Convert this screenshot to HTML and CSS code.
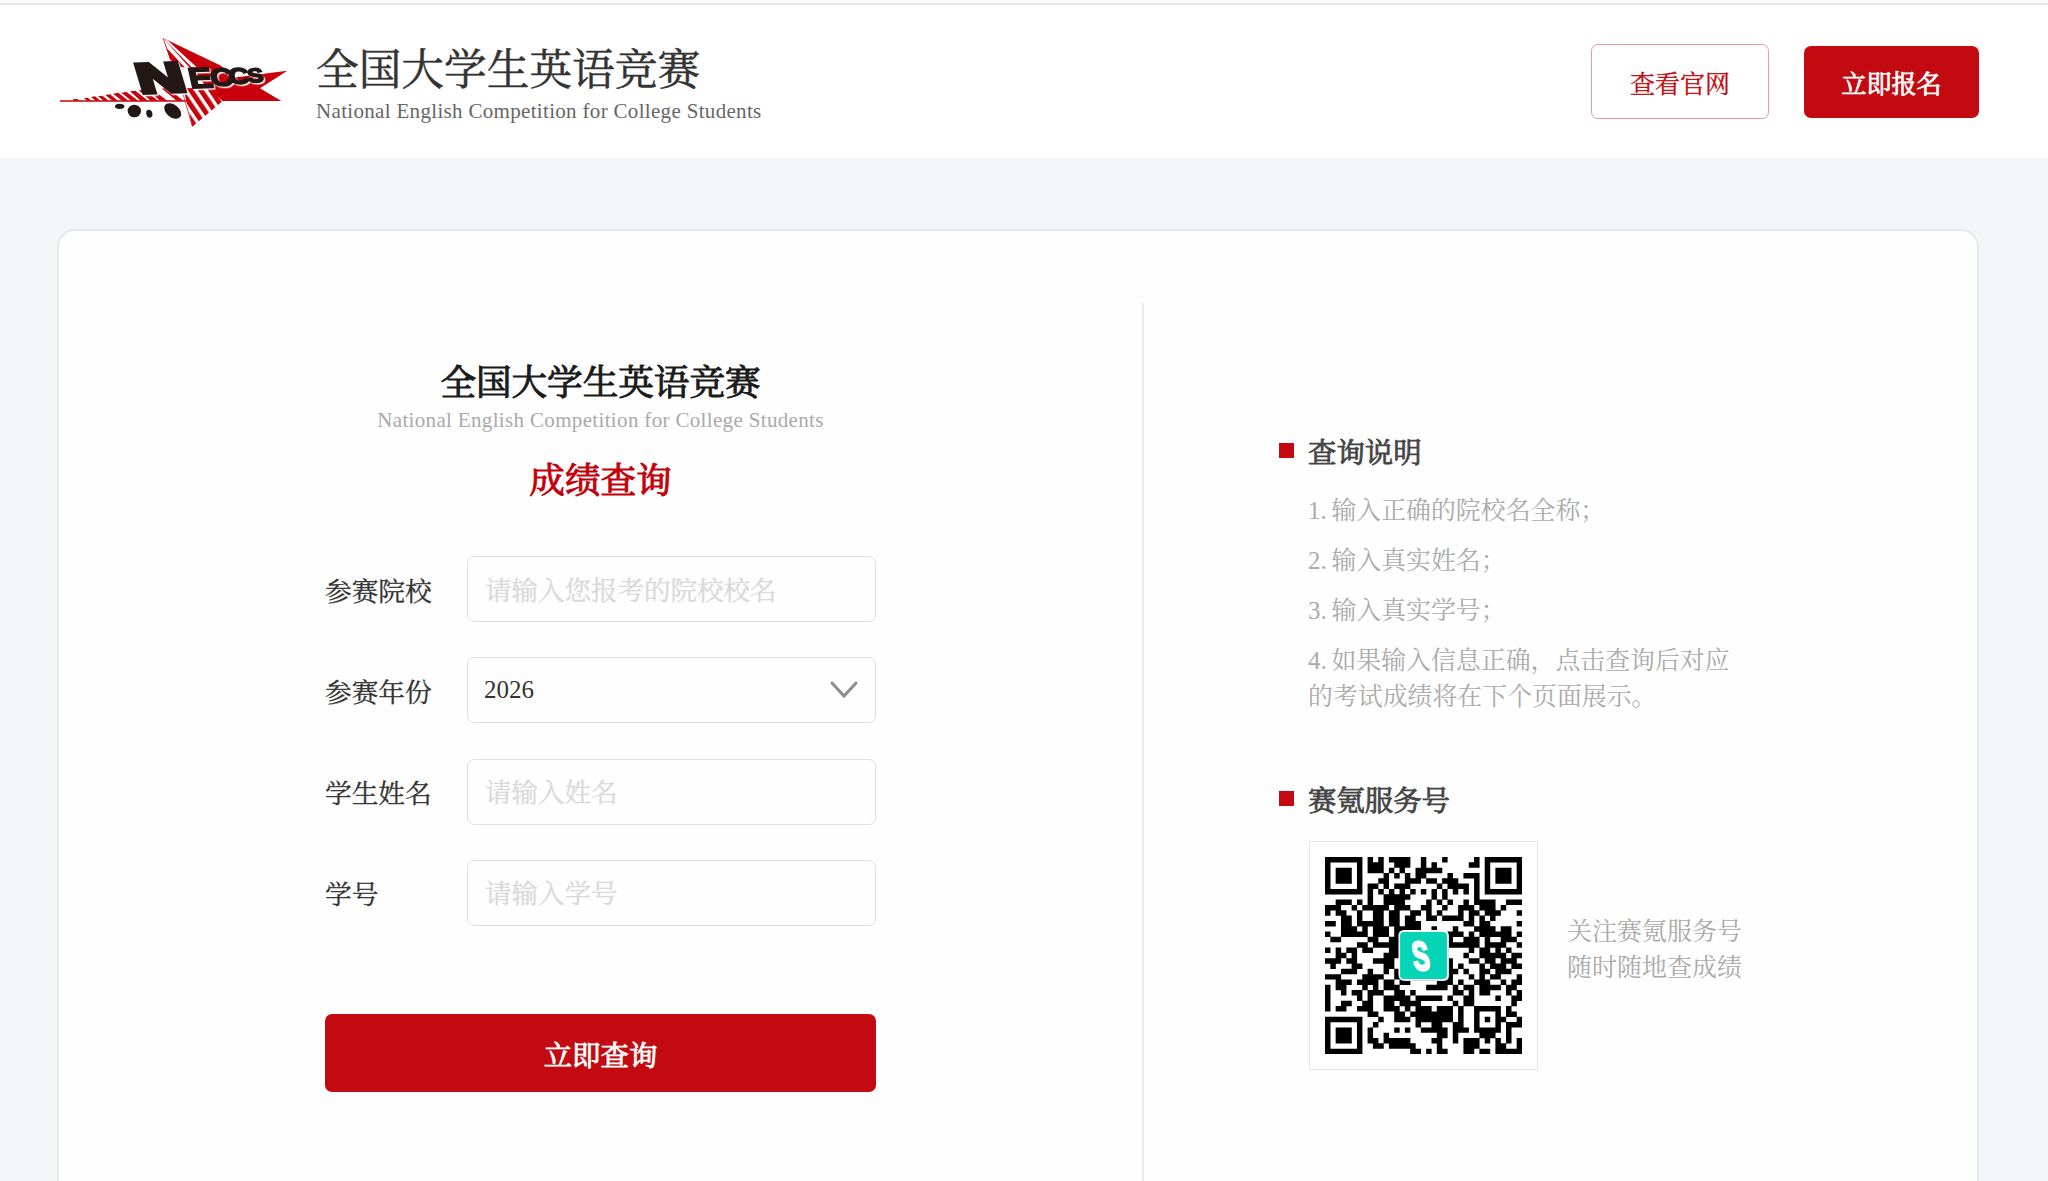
FILE: index.html
```html
<!DOCTYPE html>
<html lang="zh-CN">
<head>
<meta charset="utf-8">
<title>全国大学生英语竞赛 - 成绩查询</title>
<link rel="stylesheet" href="styles.css">
</head>
<body>
<header class="header">
  <svg class="logo" viewBox="54 0 756 360" role="img" aria-label="NECCS">
    <defs>
      <pattern id="hatch" width="25" height="25" patternUnits="userSpaceOnUse" patternTransform="rotate(-34)">
        <rect width="15" height="25" fill="#c8000b"/>
      </pattern>
    </defs>
    <g fill="#c8000b">
      <path d="M60 241 H440 V245 H60 Z"/>
      <path d="M98 237l14 0 8 5-16 0zM132 234l11-1 12 9-14 0zM153 231l12-2 16 13-14 0zM174 229l13-2 19 15-15 0zM196 225l14-2 24 19-17 0zM219 221l16-3 30 24-19 0zM244 218l16-2 34 26-20 0zM270 214l16-2 38 30-22 0zM296 211l16-2 42 33-22 0zM340 224l18 0 24 18-22 0zM366 206l14-4 50 40-20 0z"/>
    </g>
    <path d="M369 54 L540 136 L590 172 L742 152 L660 205 L724 243 L548 243 L500 200 Z" fill="#c8000b"/>
    <path d="M369 54 L384 62 L470 142 L455 142 Z" fill="#fff"/>
    <path d="M369 54 L382 86 L440 142 L424 142 L390 118 Z" fill="#c8000b"/>
    <path d="M376 66 L446 142 L434 142 L380 84 Z" fill="#fff"/>
    <path d="M430 205 L515 203 L548 243 L457 320 Z" fill="url(#hatch)"/>
    <path d="M430 225 L457 320" fill="none" stroke="#c8000b" stroke-width="2"/>
    <path d="M369 54 L396 130" fill="none" stroke="#c8000b" stroke-width="2"/>
    <g class="logo-letters">
      <text class="logo-n" transform="matrix(1.58 -.06 .3 1 303 219)" font-size="124">N</text>
      <text transform="matrix(1.24 -.04 .22 1 452 205)" font-size="86">E</text>
      <text transform="matrix(1.26 -.06 .18 1 516 199)" font-size="74">C</text>
      <text transform="matrix(1.26 -.06 .18 1 570 193)" font-size="67">C</text>
      <text transform="matrix(1.2 -.08 .18 1 626 188)" font-size="59">S</text>
    </g>
    <g fill="#231815">
      <ellipse cx="239" cy="259" rx="14" ry="8"/>
      <ellipse cx="283" cy="273" rx="20" ry="19"/>
      <ellipse cx="328" cy="281" rx="9" ry="12" transform="rotate(-15 328 281)"/>
      <ellipse cx="398" cy="273" rx="29" ry="19" transform="rotate(38 398 273)"/>
    </g>
  </svg>
  <div class="brand">
    <div class="brand-name">全国大学生英语竞赛</div>
    <div class="brand-sub">National English Competition for College Students</div>
  </div>
  <nav class="actions">
    <a class="btn btn-outline">查看官网</a>
    <a class="btn btn-solid">立即报名</a>
  </nav>
</header>
<main class="card">
  <section class="query">
    <div class="query-inner">
      <h1 class="title">全国大学生英语竞赛</h1>
      <p class="subtitle">National English Competition for College Students</p>
      <h2 class="title title-red">成绩查询</h2>
      <form class="form">
        <div class="field"><span class="label">参赛院校</span><div class="control placeholder">请输入您报考的院校校名</div></div>
        <div class="field"><span class="label">参赛年份</span><div class="control select"><span>2026</span><svg class="chevron" viewBox="0 0 28 18"><path d="M2 2 L14 15 L26 2" fill="none" stroke="#8c8c8c" stroke-width="3" stroke-linecap="round"/></svg></div></div>
        <div class="field"><span class="label">学生姓名</span><div class="control placeholder">请输入姓名</div></div>
        <div class="field"><span class="label">学号</span><div class="control placeholder">请输入学号</div></div>
        <div class="submit">立即查询</div>
      </form>
    </div>
  </section>
  <aside class="info">
    <h3 class="info-title"><span>查询说明</span></h3>
    <div class="notes">
      <p>1. 输入正确的院校名全称；</p>
      <p>2. 输入真实姓名；</p>
      <p>3. 输入真实学号；</p>
      <p>4. 如果输入信息正确，点击查询后对应<br>的考试成绩将在下个页面展示。</p>
    </div>
    <h3 class="info-title"><span>赛氪服务号</span></h3>
    <div class="service">
      <div class="qr-frame">
        <svg class="qr" viewBox="0 0 37 37">
          <path id="qr-modules" fill="#000"/>
          <rect x="13.9" y="13.8" width="9.4" height="9.5" rx="1" fill="#ddd"/>
          <rect x="13.8" y="13.7" width="9.3" height="9.4" rx="1" fill="#fff"/>
          <rect x="14.1" y="14.1" width="8.8" height="8.8" rx=".7" fill="#06d4b6"/>
          <text class="qr-mark" transform="matrix(.62 0 .16 1 16.8 21.2)" font-size="7.6">S</text>
        </svg>
      </div>
      <p class="service-text">关注赛氪服务号<br>随时随地查成绩</p>
    </div>
  </aside>
</main>
<script src="qr.js"></script>
</body>
</html>
```
FILE: styles.css
```css
* { box-sizing: border-box; }
body {
  margin: 0;
  height: 1181px;
  overflow: hidden;
  background: #f4f5f7;
  color: #333;
  font-family: "Liberation Serif", "Noto Serif CJK SC", "Noto Sans CJK SC", serif;
}
h1, h2, h3, p { margin: 0; font-weight: 400; }

.header {
  height: 158px;
  padding: 12px 69px 0 58px;
  display: flex;
  align-items: flex-start;
  background: linear-gradient(#fbfbfb 3px, #e4e4e4 3px, #e4e4e4 5px, #fff 5px);
}
.logo { width: 252px; height: 120px; margin-top: 8px; flex: none; }
.logo-letters {
  font-family: "Liberation Sans", sans-serif;
  font-weight: 700;
  fill: #231815;
  stroke: #231815;
  stroke-width: 5px;
  filter: drop-shadow(4px 4px 0 #fff);
}
.logo-n { stroke-width: 12px; }
.brand { margin-left: 6px; padding-top: 34px; }
.brand-name { font-size: 42.7px; line-height: 50px; white-space: nowrap; -webkit-text-stroke: .5px; }
.brand-sub { margin-top: 2px; font-size: 21px; line-height: 26px; letter-spacing: .32px; color: #666; white-space: nowrap; }
.actions { margin-left: auto; padding-top: 32px; display: flex; align-items: center; gap: 35px; }
.btn { display: flex; align-items: center; justify-content: center; border-radius: 7px; font-size: 25px; }
.btn-outline { width: 178px; height: 75px; border: 1.5px solid #e99ba0; color: #c20a10; -webkit-text-stroke: .3px; }
.btn-solid { width: 175px; height: 72px; background: #c20a10; color: #fff; -webkit-text-stroke: .8px; }

.card {
  margin: 71px 69px 0 57px;
  height: 1000px;
  display: flex;
  background: #fefefe;
  border: 2px solid #e6e9ed;
  border-radius: 18px;
  padding-top: 72px;
}
.query { width: 1085px; padding-left: 266px; border-right: 2px solid #e8eaec; }
.query-inner { width: 551px; padding-top: 58px; }
.title { font-size: 35.6px; line-height: 44px; text-align: center; color: #1a1a1a; -webkit-text-stroke: 1px; }
.subtitle { font-size: 21px; line-height: 26px; margin-top: 2px; letter-spacing: .34px; text-align: center; color: #aaa; white-space: nowrap; }
.title-red { margin-top: 26px; color: #c4000a; }
.form { display: flex; flex-direction: column; gap: 35.3px; margin-top: 53px; }
.field { display: flex; align-items: center; }
.label { width: 142px; font-size: 26.7px; -webkit-text-stroke: .3px; }
.control {
  width: 409px;
  height: 66px;
  padding: 0 17px 2px 17px;
  display: flex;
  align-items: center;
  border: 1.5px solid #e0e0e0;
  border-radius: 7px;
  font-size: 26.5px;
}
.placeholder { color: #d9d9d9; -webkit-text-stroke: .3px; }
.select { justify-content: space-between; padding: 0 17px 0 16px; font-size: 25px; }
.chevron { width: 28px; height: 18px; }
.submit {
  height: 78px;
  margin-top: 53px;
  display: flex;
  align-items: center;
  justify-content: center;
  border-radius: 7px;
  background: #c20a10;
  color: #fff;
  font-size: 28.4px;
  -webkit-text-stroke: .9px;
}

.info { padding: 131px 0 0 135px; }
.info-title { display: flex; align-items: center; gap: 14px; height: 36px; font-size: 28.4px; line-height: 36px; color: #444; -webkit-text-stroke: .8px; }
.info-title::before { content: ""; width: 15px; height: 15px; margin-bottom: 3px; background: #c20a10; }
.info-title span { padding-top: 4px; }
.notes { margin: 23px 0 67px 29px; display: flex; flex-direction: column; gap: 14px; font-size: 24.9px; line-height: 36px; color: #aaa; }
.notes p { white-space: nowrap; word-spacing: -1.5px; }
.service { display: flex; align-items: center; margin: 23px 0 0 30px; }
.qr-frame { width: 229px; height: 229px; padding: 15px; border: 1.5px solid #e6e6e6; background: #fff; }
.qr { display: block; width: 197px; height: 197px; }
.qr-mark { font-family: "Liberation Sans", sans-serif; font-weight: 700; fill: #fff; stroke: #fff; stroke-width: .45px; }
.service-text { margin: -11px 0 0 29px; font-size: 25px; line-height: 36px; color: #aaa; }
```
FILE: qr.js
```js
// 37 x 37 module matrix; each string is one row, spaces are separators only.
const rows = [
  "11111110 10101111 00100010 00001011 11111",
  "10000010 11100111 00101000 00011010 00001",
  "10111010 11101010 01111100 00000010 11101",
  "10111010 00010101 01100001 00111010 11101",
  "10111010 00110001 11011011 10001010 11101",
  "10000010 11010111 00000101 11101010 00001",
  "11111110 10101010 10101010 10101011 11111",
  "00000000 10011111 00001010 00001000 00000",
  "00111010 10011110 00010101 00101111 00111",
  "11100101 11110111 00110010 01110111 01000",
  "10110010 01101100 11010100 01011011 10001",
  "00011010 01101101 10011011 11010101 00000",
  "11011011 11101101 11000000 00110110 00001",
  "00011101 01110111 11001000 10001111 01100",
  "10011111 01110100 00000001 11010111 11101",
  "01100000 11001100 00000001 00111010 01110",
  "00000011 01111100 00000001 11111011 11001",
  "10101101 10001100 00000000 00010110 10100",
  "00110100 00011100 00000000 00100111 11011",
  "11101100 01111000 00000001 00011011 01110",
  "01000110 00011000 00000001 01000101 11011",
  "00011100 10010100 00000001 10100110 11100",
  "11100001 11100100 00000001 00010101 10001",
  "00111011 11011011 00000111 01001110 01011",
  "10110001 01011100 00011110 10110111 10110",
  "10010110 11100110 10000000 11010110 00101",
  "10000010 10011111 01111101 00110000 10011",
  "10011001 10011011 11000000 10110000 00010",
  "10110011 10011101 01110111 01001111 10100",
  "00000000 11000110 11111111 01001000 10110",
  "11111110 00100111 01111111 01001010 11001",
  "10000010 01000000 01001100 11001000 10111",
  "10111010 10000101 00111110 11101111 10100",
  "10111010 10010000 00000110 10000111 00100",
  "10111010 11011111 00001100 10111010 10101",
  "10000010 01101111 10000100 00111000 11001",
  "11111110 00000000 11010110 00110110 11111"
];
let d = "";
rows.forEach((row, y) => {
  row.replace(/ /g, "").split("").forEach((m, x) => {
    if (m === "1") d += `M${x} ${y}h1.03v1.03h-1.03z`;
  });
});
document.getElementById("qr-modules").setAttribute("d", d);
```
